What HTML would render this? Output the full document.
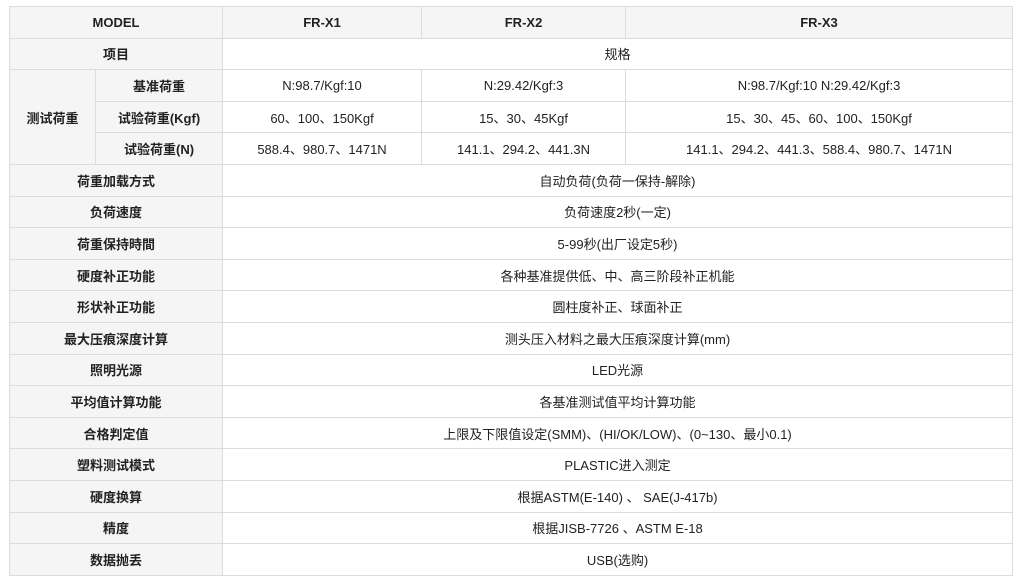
<!DOCTYPE html>
<html><head><meta charset="utf-8"><style>
html,body{margin:0;padding:0;background:#fff;width:1017px;height:572px;overflow:hidden}
table{position:absolute;left:9px;top:6px;width:1004px;border-collapse:collapse;table-layout:fixed;
font-family:"Liberation Sans","Noto Sans CJK SC",sans-serif;font-size:13px;color:#222}
td{border:1px solid #dcdcdc;text-align:center;height:30.6px;padding:0;white-space:nowrap}
.h{background:#f5f5f5;font-weight:bold}
</style></head><body>
<table>
<colgroup><col style="width:86px"><col style="width:127px"><col style="width:199px"><col style="width:204px"><col></colgroup>
<tr><td class="h" colspan="2">MODEL</td><td class="h">FR-X1</td><td class="h">FR-X2</td><td class="h">FR-X3</td></tr>
<tr><td class="h" colspan="2">项目</td><td colspan="3">规格</td></tr>
<tr><td class="h" rowspan="3">测试荷重</td><td class="h">基准荷重</td><td>N:98.7/Kgf:10</td><td>N:29.42/Kgf:3</td><td>N:98.7/Kgf:10 N:29.42/Kgf:3</td></tr>
<tr><td class="h">试验荷重(Kgf)</td><td>60、100、150Kgf</td><td>15、30、45Kgf</td><td>15、30、45、60、100、150Kgf</td></tr>
<tr><td class="h">试验荷重(N)</td><td>588.4、980.7、1471N</td><td>141.1、294.2、441.3N</td><td>141.1、294.2、441.3、588.4、980.7、1471N</td></tr>
<tr><td class="h" colspan="2">荷重加载方式</td><td colspan="3">自动负荷(负荷一保持-解除)</td></tr>
<tr><td class="h" colspan="2">负荷速度</td><td colspan="3">负荷速度2秒(一定)</td></tr>
<tr><td class="h" colspan="2">荷重保持時間</td><td colspan="3">5-99秒(出厂设定5秒)</td></tr>
<tr><td class="h" colspan="2">硬度补正功能</td><td colspan="3">各种基准提供低、中、高三阶段补正机能</td></tr>
<tr><td class="h" colspan="2">形状补正功能</td><td colspan="3">圆柱度补正、球面补正</td></tr>
<tr><td class="h" colspan="2">最大压痕深度计算</td><td colspan="3">测头压入材料之最大压痕深度计算(mm)</td></tr>
<tr><td class="h" colspan="2">照明光源</td><td colspan="3">LED光源</td></tr>
<tr><td class="h" colspan="2">平均值计算功能</td><td colspan="3">各基准测试值平均计算功能</td></tr>
<tr><td class="h" colspan="2">合格判定值</td><td colspan="3">上限及下限值设定(SMM)、(HI/OK/LOW)、(0~130、最小0.1)</td></tr>
<tr><td class="h" colspan="2">塑料测试模式</td><td colspan="3">PLASTIC进入测定</td></tr>
<tr><td class="h" colspan="2">硬度换算</td><td colspan="3">根据ASTM(E-140) 、 SAE(J-417b)</td></tr>
<tr><td class="h" colspan="2">精度</td><td colspan="3">根据JISB-7726 、ASTM E-18</td></tr>
<tr><td class="h" colspan="2">数据抛丢</td><td colspan="3">USB(选购)</td></tr>
</table>
</body></html>
